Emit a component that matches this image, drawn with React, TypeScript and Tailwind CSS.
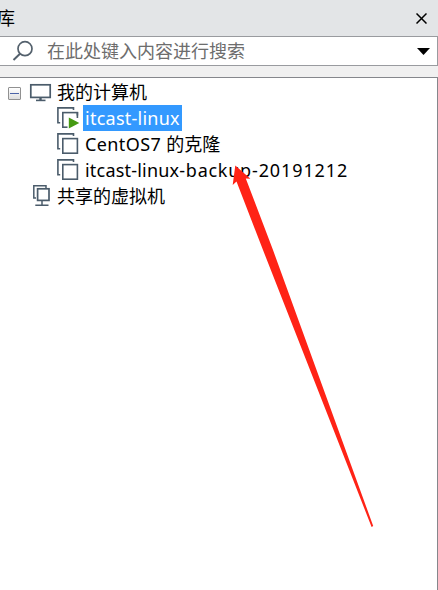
import type { ReactNode } from 'react';

function VmIcon({ running = false }: { running?: boolean }) {
  return (
    <svg className="block shrink-0" width="24" height="26" viewBox="0 0 24 26" fill="none">
      <path d="M17.5 5V2.9H1.9V17.8H4.2" stroke="#4b5c6b" strokeWidth="1.6" />
      <rect x="6.8" y="7.6" width="14.6" height="14.6" fill="#fff" stroke="#4b5c6b" strokeWidth="1.6" />
      {running && <path d="M11.5 10.5h12v14h-12z" fill="#fff" />}
      {running && <path d="M12.8 12.6L23.3 18L12.8 23.6Z" fill="#459a12" />}
      {running && <path d="M21.4 7V13" stroke="#4b5c6b" strokeWidth="1.6" />}
    </svg>
  );
}

function MonitorIcon() {
  return (
    <svg className="block shrink-0" width="24" height="26" viewBox="0 0 24 26" fill="none" stroke="#4b5c6b">
      <rect x="1.8" y="5.8" width="19.4" height="12.6" strokeWidth="1.7" />
      <path d="M11.5 18V21" strokeWidth="2.4" />
      <path d="M7 21.4H16.5" strokeWidth="1.6" />
    </svg>
  );
}

function SharedIcon() {
  return (
    <svg className="block shrink-0" width="24" height="26" viewBox="0 0 24 26" fill="none" stroke="#4b5c6b">
      <path d="M17 5V2.7H4.8V15H7" strokeWidth="1.5" />
      <rect x="8.6" y="5.8" width="11.4" height="11.6" strokeWidth="1.7" />
      <path d="M13 18V22M6.3 22.3H19.5" strokeWidth="1.5" />
    </svg>
  );
}

function Row({ icon, children, child = false }: { icon: ReactNode; children: ReactNode; child?: boolean }) {
  return (
    <div className={`flex h-[26px] items-center ${child ? 'pl-[56px]' : 'pl-[29px]'}`}>
      {icon}
      {children}
    </div>
  );
}

export default function App() {
  return (
    <div className="relative flex h-[590px] w-[438px] flex-col overflow-hidden bg-[#f0f0f0] font-['Noto_Sans','Noto_Sans_CJK_SC',sans-serif] text-[18px] leading-[26px] whitespace-nowrap text-black">
      <header className="flex h-9 shrink-0 items-center justify-between bg-[#e3e5e7] pr-[11px]">
        <span className="-ml-[3px]">库</span>
        <svg width="11" height="11" viewBox="0 0 11 11" stroke="#000" strokeWidth="1.5">
          <path d="M.5 .5L10.5 10.5M10.5 .5L.5 10.5" />
        </svg>
      </header>
      <div className="flex h-[30px] shrink-0 items-center border-y border-r border-[#999b9f] bg-white pr-[7px] text-[#6d6d6d]">
        <svg className="ml-3 shrink-0" width="22" height="22" viewBox="0 0 22 22" fill="none" stroke="#53606c">
          <circle cx="13" cy="8.7" r="7" strokeWidth="1.7" />
          <path d="M8 13.8L1.5 20" strokeWidth="2" />
        </svg>
        <span className="ml-[13px] flex-1">在此处键入内容进行搜索</span>
        <svg width="13" height="7" viewBox="0 0 13 7">
          <path d="M0 0H13L6.5 7Z" fill="#000" />
        </svg>
      </div>
      <main className="mt-[11px] flex-1 border-t border-r border-[#85878c] bg-white pt-px">
        <div className="flex h-[26px] items-center">
          <div className="ml-2 mt-0.5 flex h-[13px] w-[13px] items-center justify-center rounded-[1px] border border-[#919191] bg-linear-to-b from-white to-[#dedede]">
            <div className="h-px w-[9px] bg-[#4b63a7]" />
          </div>
          <div className="ml-2 flex items-center">
            <MonitorIcon />
            <span className="ml-1">我的计算机</span>
          </div>
        </div>
        <Row child icon={<VmIcon running />}>
          <span className="ml-[3px] h-[26px] w-[99px] bg-[#3399ff] pl-0.5 tracking-[0.25px] text-white">itcast-linux</span>
        </Row>
        <Row child icon={<VmIcon />}>
          <span className="ml-[5px]">
            <span className="tracking-[0.4px]">CentOS7 </span>的克隆
          </span>
        </Row>
        <Row child icon={<VmIcon />}>
          <span className="ml-[5px]">
            <span className="tracking-[0.2px]">itcast-linux</span>
            <span className="tracking-[0.75px]">-backup</span>
            <span className="tracking-[0.9px]">-20191212</span>
          </span>
        </Row>
        <Row icon={<SharedIcon />}>
          <span className="ml-1">共享的虚拟机</span>
        </Row>
      </main>
      <svg className="pointer-events-none absolute inset-0" width="438" height="590" viewBox="0 0 438 590">
        <path d="M235.3 165.5L250.4 178.7L245.8 178.5L273 250L373.2 526L371.6 527L263 250L236.5 181.5L232.7 185Z" fill="#ff2316" />
      </svg>
    </div>
  );
}
